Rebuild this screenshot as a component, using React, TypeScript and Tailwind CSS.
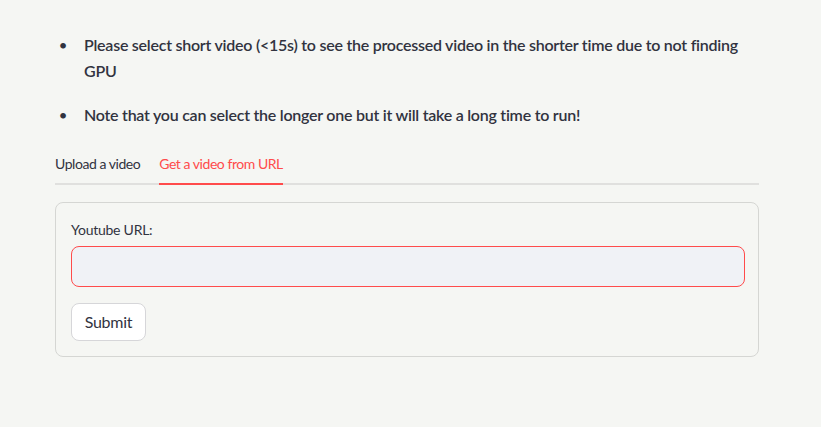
import { useState } from 'react';

const font = { fontFamily: '"Source Sans Pro", Lato, "Noto Sans", sans-serif' };

export default function App() {
  const [tab, setTab] = useState(1);
  const [url, setUrl] = useState('');

  return (
    <div className="min-h-[427px] w-full bg-[#f5f6f3] text-[#31333f] tracking-[-0.25px]" style={font}>
      <div className="ml-[55px] w-[705px] pt-[32px]">
        <ul className="flex flex-col gap-[19px] text-[16px] font-semibold leading-[25.6px]">
          <li className="flex">
            <span className="w-[29px] shrink-0 pl-[4px] text-[14px]">•</span>
            <span>
              Please select short video (&lt;15s) to see the processed video in the shorter time due to not finding
              GPU
            </span>
          </li>
          <li className="flex">
            <span className="w-[29px] shrink-0 pl-[4px] text-[14px]">•</span>
            <span>Note that you can select the longer one but it will take a long time to run!</span>
          </li>
        </ul>

        <div className="mt-[14px] flex w-[704px] gap-[19px] border-b-2 border-[#e0e0de] text-[14px] tracking-[-0.45px]">
          {['Upload a video', 'Get a video from URL'].map((label, i) => (
            <button
              key={label}
              onClick={() => setTab(i)}
              className={`-mb-[2px] h-[43px] border-b-2 pt-[2px] ${
                tab === i ? 'border-[#ff4b4b] text-[#ff4b4b]' : 'border-transparent text-[#31333f]'
              }`}
            >
              {label}
            </button>
          ))}
        </div>

        <div className="mt-[17px] w-[704px] rounded-[8px] border border-[#d5d6d3] px-[15px] pt-[16px] pb-[15px]">
          <label className="block text-[14px] leading-[21px]">Youtube URL:</label>
          <input
            value={url}
            onChange={e => setUrl(e.target.value)}
            className="mt-[6px] block h-[41px] w-[674px] rounded-[8px] border border-[#ff4b4b] bg-[#f0f2f6] px-3 text-[16px] outline-none"
          />
          <button className="mt-[16px] h-[38px] w-[75px] rounded-[8px] border border-[#d6d6d9] bg-white text-[16px]">
            Submit
          </button>
        </div>
      </div>
    </div>
  );
}
